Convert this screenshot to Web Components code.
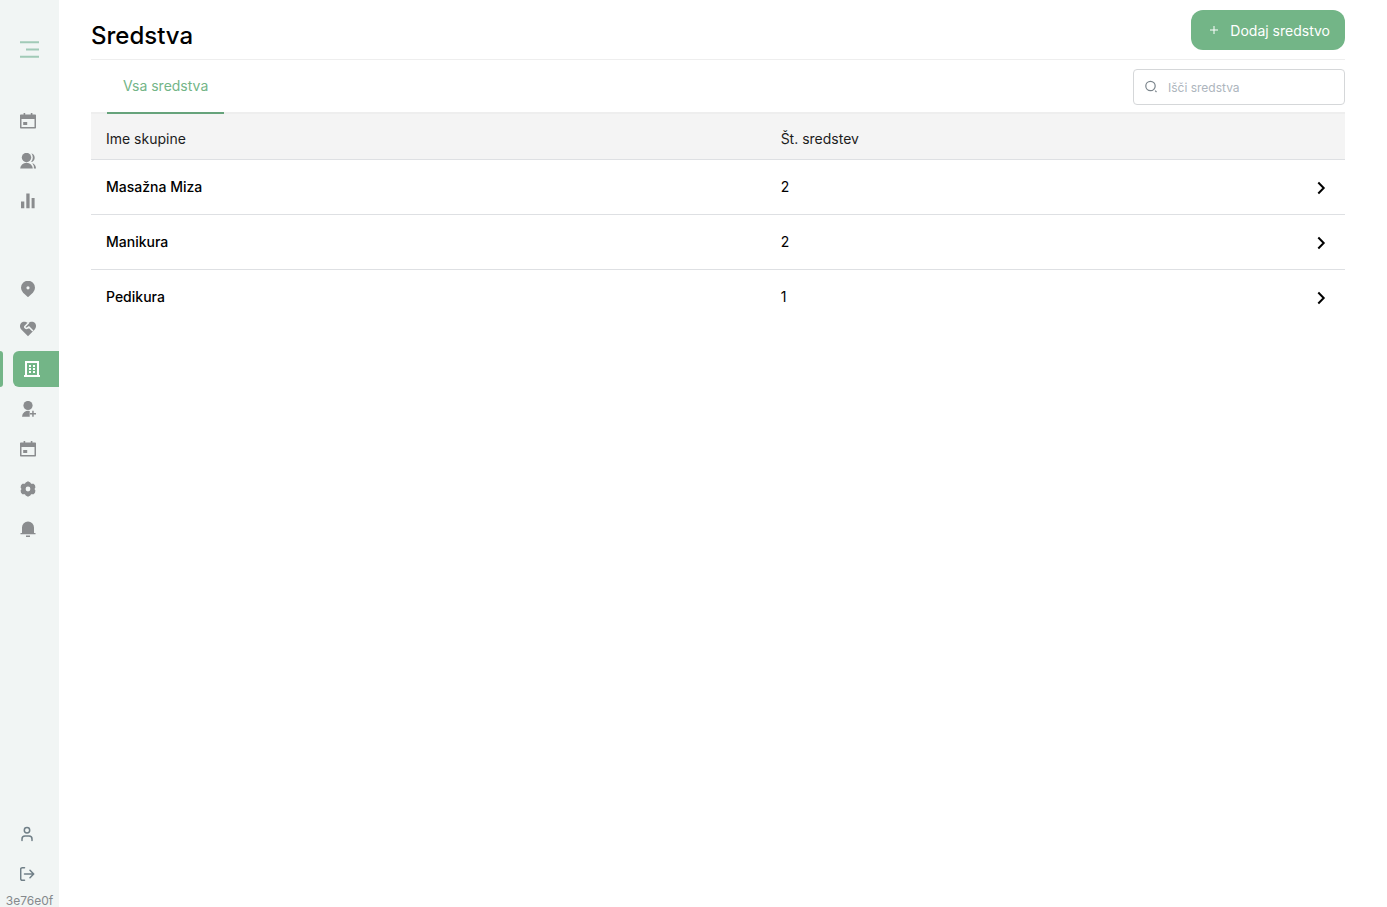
<!DOCTYPE html>
<html lang="sl">
<head>
<meta charset="utf-8">
<meta name="viewport" content="width=device-width, initial-scale=1">
<title>Sredstva</title>
<style>
    body {
        margin: 0;
        font-family: Inter, "Liberation Sans", sans-serif;
        font-size: 14px;
        color: #000;
        background: #fff;
        --green: #73b587;
        --line: #dee0e3;
    }
</style>
</head>
<body>
<app-shell>
    <side-bar slot="sidebar" version="3e76e0f">
        <nav-item icon="calendar" label="Koledar"></nav-item>
        <nav-item icon="group" label="Stranke"></nav-item>
        <nav-item icon="chart" label="Statistika"></nav-item>
        <nav-item slot="manage" icon="pin" label="Lokacije"></nav-item>
        <nav-item slot="manage" icon="hands" label="Storitve"></nav-item>
        <nav-item slot="manage" icon="building" label="Sredstva" active></nav-item>
        <nav-item slot="manage" icon="useradd" label="Zaposleni"></nav-item>
        <nav-item slot="manage" icon="calendar" label="Urniki"></nav-item>
        <nav-item slot="manage" icon="settings" label="Nastavitve"></nav-item>
        <nav-item slot="manage" icon="bell" label="Obvestila"></nav-item>
        <nav-item slot="account" icon="user" label="Profil" thin></nav-item>
        <nav-item slot="account" icon="logout" label="Odjava" thin></nav-item>
    </side-bar>
    <page-header>
        Sredstva
        <add-button slot="action">Dodaj sredstvo</add-button>
    </page-header>
    <tab-bar>
        <tab-link active>Vsa sredstva</tab-link>
        <search-box slot="search" placeholder="Išči sredstva"></search-box>
    </tab-bar>
    <group-table></group-table>
</app-shell>

<script>
// all icons are drawn on a 16x16 grid
const ICONS = {
    calendar: `<path fill-rule="evenodd" d="M3.6 0h1.6v1.5h5.6V0h1.6v1.5h2.8a.8.8 0 0 1 .8.8v12.4a.8.8 0 0 1-.8.8H.8a.8.8 0 0 1-.8-.8V2.300a.8.8 0 0 1 .8-.8h2.800zM1.500 6v8h13V6zM3.200 9h4v3h-4z"/>`,
    group: `<circle cx="6.500" cy="4.500" r="4.700"/><path d="M.2 15.500a6.300 5.800 0 0 1 12.600 0zM11.400.2a4.800 4.800 0 0 1 .7 8.800l-1-.3a6.500 6.500 0 0 0 .3-8.500zM12.300 9.900a6.200 6.200 0 0 1 3.700 5.600h-2.100a8 8 0 0 0-1.600-5.600z"/>`,
    chart: `<path d="M1 8.500h3.300v6.700H1zM6.300.5h3.300v14.700H6.300zM11.600 5h3v10.200h-3z"/>`,
    pin: `<path fill-rule="evenodd" d="M8 16.200 3.100 11.700a7 7 0 1 1 9.800 0zM8 5.200a1.600 1.600 0 1 0 0 3.200 1.600 1.600 0 0 0 0-3.200z"/>`,
    hands: `<path d="M8 2.300C10 .2 13.300.2 15 2.100c1.500 1.900 1.300 4.600-.3 6.400L8 15.300 1.300 8.500C-.4 6.700-.5 3.900 1.100 2.100 2.700.3 6 .2 8 2.300z"/><path d="M8.600 1.800 4.900 5.500c-.7 1 1 2.400 2.500 1.500l1.500-1 4 4" fill="none" stroke="#f1f5f4" stroke-width="1.600"/>`,
    building: `<path fill-rule="evenodd" d="M1 0h14v14h1v2H0v-2h1zM3 2v12h10V2z"/><path d="M5 4h2v2H5zM9 4h2v2H9zM5 7h2v2H5zM9 7h2v2H9zM5 10h2v2H5zM9 10h2v2H9z"/>`,
    useradd: `<circle cx="8" cy="4.500" r="4.600"/><path d="M2 15.800a6.200 6 0 0 1 7.700-5.800v5.800zM12.200 9.800h1.500V12H16v1.400h-2.300v2.400h-1.500v-2.400H10V12h2.200z"/>`,
    settings: `<path fill-rule="evenodd" d="M5.700 1.500 8 .2l2.300 1.300.8 1.200h2.500L15 4.300l.4 2.100L14.500 8l.9 1.600-.4 2.100-1.400 1.600h-2.500l-.8 1.200L8 15.800l-2.300-1.300-.8-1.200H2.400L1 11.700.6 9.600 1.500 8 .6 6.400 1 4.300l1.400-1.600h2.500zM8 5.600a2.400 2.400 0 1 0 0 4.800 2.400 2.400 0 0 0 0-4.800z"/>`,
    bell: `<path d="M2 12V6.500a6 6 0 0 1 12 0V12h1.500v1.300H.5V12zM6 14.500h4V16H6z"/>`,
    user: `<circle cx="7" cy="4.300" r="2.700"/><path d="M2 14.500v-1.500a3 3 0 0 1 3-3h4a3 3 0 0 1 3 3v1.500"/>`,
    logout: `<path d="M4.500 1.700H2.200a1.500 1.500 0 0 0-1.500 1.500v9.600a1.500 1.500 0 0 0 1.500 1.500h2.300M4.500 8h9M10 4.300 13.700 8 10 11.700"/>`,
    search: `<circle cx="6.500" cy="7" r="4.700"/><path d="m11.200 11.700 1.300 1.300"/>`,
    plus: `<path d="M8 4v8M4 8h8"/>`,
    chevron: `<path d="m4.300 2.500 5.400 5.500-5.400 5.500"/>`
};

const icon = (name) => `<svg width="16" height="16" viewBox="0 0 16 16" aria-hidden="true">${ICONS[name]}</svg>`;

class BaseElement extends HTMLElement {
    connectedCallback() {
        if (this.shadowRoot) return;
        this.attachShadow({ mode: "open" });
        this.shadowRoot.innerHTML = this.render();
    }
}

class AppShell extends BaseElement {
    render() {
        return /*html*/`
<style>
    :host { display: flex; min-height: 100vh; }
    main { flex: 1; min-width: 0; padding: 0 42px 0 32px; }
</style>
<slot name="sidebar"></slot>
<main><slot></slot></main>`;
    }
}

class SideBar extends BaseElement {
    render() {
        return /*html*/`
<style>
    :host {
        display: flex;
        flex-direction: column;
        box-sizing: border-box;
        flex: none;
        width: 59px;
        height: 100vh;
        background: #f1f5f4;
    }
    .toggle {
        display: flex;
        align-items: center;
        height: 100px;
        padding: 0 0 0 20px;
        border: 0;
        background: none;
        color: #a1cab7;
    }
    nav { padding-top: 1px; margin-bottom: 48px; }
    .account { margin-top: auto; }
    small {
        font-size: 12px;
        line-height: 14px;
        height: 13px;
        text-align: center;
        color: #85898c;
    }
</style>
<button class="toggle" aria-label="Meni">
    <svg width="19" height="18" viewBox="0 0 19 18" fill="none" stroke="currentColor" stroke-width="2"><path d="M0 1.200h19M6 8.500h13M0 15.800h19"/></svg>
</button>
<nav><slot></slot></nav>
<div><slot name="manage"></slot></div>
<div class="account"><slot name="account"></slot></div>
<small>${this.getAttribute("version")}</small>`;
    }
}

class NavItem extends BaseElement {
    render() {
        return /*html*/`
<style>
    :host { display: flex; gap: 10px; padding: 2px 0; color: #8a8c8e; }
    .mark { width: 3px; border-radius: 0 4px 4px 0; }
    a {
        display: flex;
        align-items: center;
        flex: 1;
        height: 36px;
        padding-left: 7px;
        border-radius: 6px 0 0 6px;
        color: inherit;
    }
    svg { fill: currentColor; }
    :host([thin]) { color: #707f87; }
    :host([thin]) svg { fill: none; stroke: currentColor; stroke-width: 1.500; stroke-linecap: round; stroke-linejoin: round; }
    :host([active]) { color: #fff; }
    :host([active]) .mark, :host([active]) a { background: var(--green); }
    :host([active]) a { padding-left: 11px; }
</style>
<span class="mark"></span>
<a href="#" aria-label="${this.getAttribute("label")}">${icon(this.getAttribute("icon"))}</a>`;
    }
}

class PageHeader extends BaseElement {
    render() {
        return /*html*/`
<style>
    :host {
        display: flex;
        justify-content: space-between;
        height: 59px;
        border-bottom: 1px solid #eee;
    }
    h1 { margin: 0; padding-top: 20px; font-size: 24px; line-height: 32px; font-weight: 500; }
    .action { padding-top: 10px; }
</style>
<h1><slot></slot></h1>
<div class="action"><slot name="action"></slot></div>`;
    }
}

class AddButton extends BaseElement {
    render() {
        return /*html*/`
<style>
    button {
        display: flex;
        align-items: center;
        gap: 8px;
        height: 40px;
        padding: 0 15px;
        border: 0;
        border-radius: 12px;
        background: var(--green);
        color: #fff;
        font: inherit;
    }
    svg { stroke: currentColor; stroke-width: 1; }
</style>
<button>${icon("plus")}<slot></slot></button>`;
    }
}

class TabBar extends BaseElement {
    render() {
        return /*html*/`
<style>
    :host {
        display: flex;
        justify-content: space-between;
        height: 52px;
        padding-left: 16px;
        border-bottom: 2px solid #eee;
    }
    .search { padding-top: 9px; }
</style>
<nav><slot></slot></nav>
<div class="search"><slot name="search"></slot></div>`;
    }
}

class TabLink extends BaseElement {
    render() {
        return /*html*/`
<style>
    :host { display: block; }
    a {
        display: block;
        height: 52px;
        line-height: 52px;
        padding: 0 16px;
        color: var(--green);
        text-decoration: none;
    }
    /* sits on top of the bar's own border */
    :host([active]) a { border-bottom: 2px solid #66a37b; }
</style>
<a href="#"><slot></slot></a>`;
    }
}

class SearchBox extends BaseElement {
    render() {
        const text = this.getAttribute("placeholder");
        return /*html*/`
<style>
    label {
        display: flex;
        align-items: center;
        gap: 8px;
        box-sizing: border-box;
        width: 212px;
        height: 36px;
        padding: 0 10px;
        border: 1px solid #d5d7d9;
        border-radius: 4px;
    }
    svg { flex: none; fill: none; stroke: #7b858c; stroke-width: 1.200; }
    input {
        flex: 1;
        min-width: 0;
        padding: 0;
        border: 0;
        outline: 0;
        background: none;
        font: inherit;
        font-size: 12px;
    }
    input::placeholder { color: #adb5bd; }
</style>
<label>${icon("search")}<input type="text" aria-label="${text}" placeholder="${text}"></label>`;
    }
}

class GroupTable extends BaseElement {
    groups = [
        { name: "Masažna Miza", count: 2 },
        { name: "Manikura", count: 2 },
        { name: "Pedikura", count: 1 }
    ];

    render() {
        return /*html*/`
<style>
    table { width: 100%; border-collapse: separate; border-spacing: 0; table-layout: fixed; }
    th, td { box-sizing: border-box; padding: 0 15px; text-align: left; border-bottom: 1px solid var(--line); }
    th { height: 46px; padding-top: 4px; background: #f4f4f4; font-weight: 400; color: #1c1c1c; }
    td { height: 55px; padding-bottom: 1px; }
    tr:last-child td { border-bottom-color: transparent; }
    .name { width: 53.8%; }
    td.name { font-weight: 500; }
    .open { text-align: right; }
    button { padding: 0; border: 0; background: none; color: inherit; vertical-align: middle; }
    svg { display: block; fill: none; stroke: currentColor; stroke-width: 2; }
</style>
<table>
    <thead>
        <tr><th class="name">Ime skupine</th><th>Št. sredstev</th><th></th></tr>
    </thead>
    <tbody>
        ${this.groups.map((g) => `<tr>
            <td class="name">${g.name}</td>
            <td>${g.count}</td>
            <td class="open"><button aria-label="Odpri ${g.name}">${icon("chevron")}</button></td>
        </tr>`).join("")}
    </tbody>
</table>`;
    }
}

customElements.define("app-shell", AppShell);
customElements.define("side-bar", SideBar);
customElements.define("nav-item", NavItem);
customElements.define("page-header", PageHeader);
customElements.define("add-button", AddButton);
customElements.define("tab-bar", TabBar);
customElements.define("tab-link", TabLink);
customElements.define("search-box", SearchBox);
customElements.define("group-table", GroupTable);
</script>
</body>
</html>
